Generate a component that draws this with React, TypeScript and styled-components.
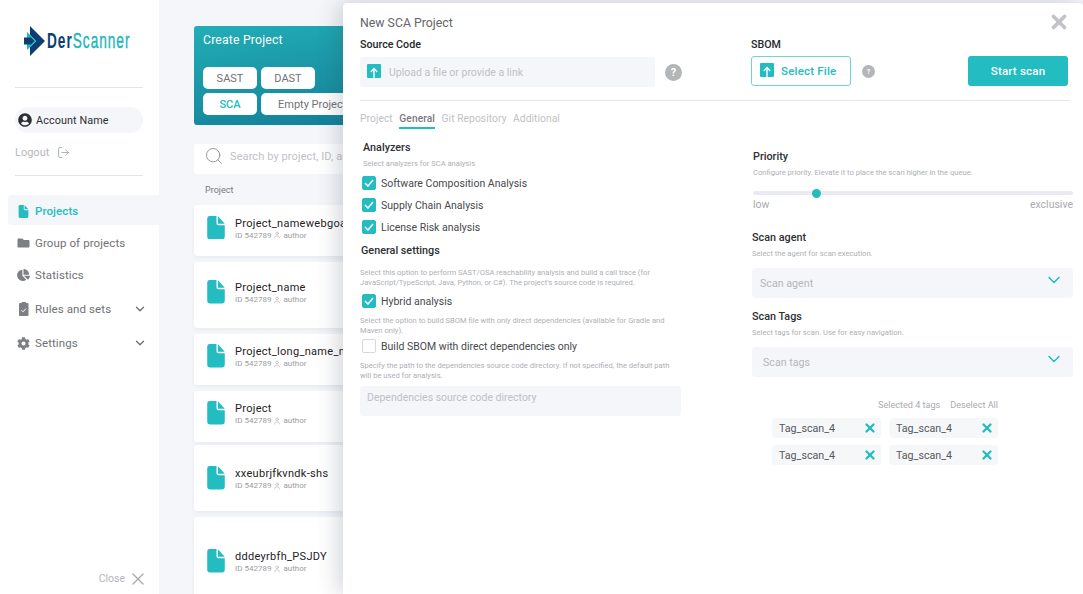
import styled, { createGlobalStyle } from 'styled-components';
import { ChevronDown, LogOut, Search, User, X } from 'lucide-react';
import { FaCog, FaFolder, FaUserCircle, FaChartPie } from 'react-icons/fa';

const TEAL = '#22bcc1';

const GlobalStyle = createGlobalStyle`
  * { box-sizing: border-box; }
  html, body { margin: 0; padding: 0; }
  body { font-family: Roboto, "Noto Sans", Arial, sans-serif; background: #fff; }
  #root { height: 594px; }
`;

const Page = styled.div`
  position: relative;
  display: flex;
  width: 1083px;
  height: 594px;
  overflow: hidden;
  background: #f4f6fa;
`;

const Sidebar = styled.aside`
  width: 159px;
  height: 594px;
  flex: none;
  background: #fff;
  display: flex;
  flex-direction: column;
  padding-top: 26px;
`;

const LogoRow = styled.div`
  display: flex;
  align-items: center;
  height: 30px;
  margin-left: 24px;
  gap: 1px;
  svg { flex: none; }
`;

const LogoText = styled.span`
  font-family: "Liberation Sans", sans-serif;
  font-size: 22px;
  font-weight: 700;
  letter-spacing: 1.6px;
  color: #0b3f73;
  display: inline-block;
  transform: scaleX(0.62);
  transform-origin: left center;
  white-space: nowrap;
  em { font-style: normal; color: #1fb5bc; font-weight: 400; -webkit-text-stroke: 0.4px #1fb5bc; }
`;

const SideDivider = styled.div<{ $top: number }>`
  width: 128px;
  height: 1px;
  margin: ${(p) => p.$top}px 0 0 15px;
  background: #e4e5e8;
`;

const AccountPill = styled.div`
  width: 128px;
  height: 26px;
  margin: 19px 0 0 15px;
  border-radius: 13px;
  background: #f4f6fa;
  display: flex;
  align-items: center;
  gap: 4px;
  padding-left: 3px;
  font-size: 10.8px;
  letter-spacing: 0.1px;
  color: #2d2f33;
`;

const Logout = styled.div`
  display: flex;
  align-items: center;
  gap: 8px;
  margin: 12px 0 0 15px;
  height: 14px;
  font-size: 11px;
  color: #b5b7bb;
`;

const NavList = styled.nav`
  display: flex;
  flex-direction: column;
  margin-top: 19px;
  padding-left: 8px;
`;

const NavItem = styled.div<{ $active?: boolean; $h: number }>`
  height: ${(p) => p.$h}px;
  display: flex;
  align-items: center;
  gap: 5px;
  padding: ${(p) => (p.$active ? 2 : 0)}px 13px 0 9px;
  border-radius: 4px 0 0 4px;
  font-size: 11.5px;
  letter-spacing: 0.1px;
  font-weight: ${(p) => (p.$active ? 500 : 400)};
  color: ${(p) => (p.$active ? TEAL : '#6f7175')};
  background: ${(p) => (p.$active ? '#f4f6fa' : 'transparent')};
  svg.lead { width: 13px; flex: none; }
  svg.chev { margin-left: auto; margin-right: -1px; }
`;

const CloseRow = styled.div`
  margin-top: auto;
  height: 25px;
  display: flex;
  align-items: flex-start;
  justify-content: flex-end;
  gap: 3px;
  padding-right: 11px;
  font-size: 10.5px;
  line-height: 20px;
  color: #b5b7bb;
`;

const Main = styled.main`
  flex: 1;
  min-width: 0;
  padding: 26px 0 0 35px;
  display: flex;
  flex-direction: column;
`;

const CreateCard = styled.section`
  width: 300px;
  height: 99px;
  flex: none;
  border-radius: 3px;
  padding: 6px 9px;
  background: linear-gradient(170deg, #22aeb6 0%, #0f7793 100%);
`;

const CreateTitle = styled.div`
  font-size: 12.2px;
  letter-spacing: 0.2px;
  color: #fff;
  height: 35px;
  padding-top: 1px;
`;

const TypeGrid = styled.div`
  display: grid;
  grid-template-columns: 54px 54px 120px;
  grid-auto-rows: 22px;
  gap: 4px;
`;

const TypeButton = styled.div<{ $active?: boolean; $wide?: boolean }>`
  ${(p) => (p.$wide ? 'grid-column: 2 / span 2; justify-content: flex-start; padding-left: 17px;' : 'justify-content: center;')}
  background: #fff;
  border-radius: 5px;
  display: flex;
  align-items: center;
  font-size: 11px;
  font-weight: ${(p) => (p.$active ? 500 : 400)};
  color: ${(p) => (p.$active ? TEAL : '#6f7175')};
  white-space: nowrap;
`;

const SearchBox = styled.div`
  width: 300px;
  height: 30px;
  flex: none;
  margin-top: 19px;
  background: #fff;
  border-radius: 3px;
  display: flex;
  align-items: center;
  gap: 6px;
  padding: 0 0 6px 10px;
  font-size: 11px;
  letter-spacing: 0.1px;
  color: #c0c2c6;
  white-space: nowrap;
  overflow: hidden;
`;

const ListLabel = styled.div`
  height: 31px;
  flex: none;
  padding: 11px 0 0 11px;
  font-size: 9px;
  color: #77797d;
`;

const Rows = styled.div`
  display: flex;
  flex-direction: column;
  gap: 6px;
`;

const Row = styled.div<{ $h: number; $nudge: number; $lift: number }>`
  width: 300px;
  height: ${(p) => p.$h}px;
  flex: none;
  margin-top: ${(p) => p.$nudge}px;
  padding: 0 0 ${(p) => p.$lift}px 13px;
  background: #fff;
  border-radius: 3px;
  box-shadow: 0 2px 4px rgba(40, 50, 90, 0.06);
  display: flex;
  align-items: center;
  gap: 10px;
`;

const RowText = styled.div`
  display: flex;
  flex-direction: column;
  padding-top: 2px;
  white-space: nowrap;
`;

const RowName = styled.div`
  font-size: 11px;
  letter-spacing: 0.3px;
  line-height: 13px;
  color: #1f2125;
`;

const RowMeta = styled.div`
  display: flex;
  align-items: center;
  gap: 2px;
  font-size: 8px;
  line-height: 11px;
  color: #9a9ca0;
`;

const Drawer = styled.section`
  position: absolute;
  top: 3px;
  left: 343px;
  width: 740px;
  height: 591px;
  background: #fff;
  border-radius: 4px 4px 0 0;
  box-shadow: -4px 0 22px rgba(60, 65, 85, 0.24);
  padding: 12px 15px 0 17px;
`;

const DrawerHead = styled.div`
  display: flex;
  justify-content: space-between;
  align-items: flex-start;
  height: 34px;
  svg { margin: -4px -2px 0 0; }
`;

const DrawerTitle = styled.h2`
  margin: 0;
  font-size: 12.3px;
  line-height: 16px;
  font-weight: 400;
  color: #63656a;
`;

const UploadRow = styled.div`
  display: flex;
  align-items: flex-start;
  margin: -11px -2px 0 0;
  height: 63px;
  border-bottom: 1px solid #e4e5e8;
`;

const SourceCol = styled.div`
  width: 295px;
`;

const FieldLabel = styled.div`
  font-size: 10.7px;
  font-weight: 500;
  line-height: 13px;
  color: #26282c;
`;

const UploadField = styled.div`
  height: 30px;
  margin-top: 6px;
  background: #f4f6fa;
  border-radius: 3px;
  display: flex;
  align-items: center;
  gap: 8px;
  padding-left: 7px;
  font-size: 10.5px;
  color: #bfc1c5;
`;

const HelpDot = styled.span<{ $size: number; $left: number; $top: number }>`
  width: ${(p) => p.$size}px;
  height: ${(p) => p.$size}px;
  flex: none;
  margin: ${(p) => p.$top}px 0 0 ${(p) => p.$left}px;
  border-radius: 50%;
  background: #b4b5b7;
  color: #fff;
  font-size: ${(p) => p.$size - 6}px;
  font-weight: 700;
  display: flex;
  align-items: center;
  justify-content: center;
`;

const SbomCol = styled.div`
  width: 100px;
  margin-left: 69px;
`;

const SelectFile = styled.div`
  width: 100px;
  height: 30px;
  margin-top: 5px;
  border: 1px solid #6fd5d8;
  border-radius: 3px;
  display: flex;
  align-items: center;
  gap: 7px;
  padding-left: 8px;
  font-size: 11.5px;
  font-weight: 500;
  letter-spacing: 0.2px;
  color: ${TEAL};
`;

const StartScan = styled.div`
  width: 100px;
  height: 30px;
  margin: 18px 0 0 93px;
  border-radius: 3px;
  background: ${TEAL};
  color: #fff;
  font-size: 11.5px;
  font-weight: 500;
  letter-spacing: 0.2px;
  display: flex;
  align-items: center;
  justify-content: center;
`;

const Tabs = styled.div`
  display: flex;
  gap: 6.5px;
  height: 29px;
  margin-top: 11px;
`;

const Tab = styled.div<{ $active?: boolean }>`
  height: 17px;
  font-size: 10.2px;
  line-height: 14px;
  letter-spacing: 0.1px;
  font-weight: ${(p) => (p.$active ? 500 : 400)};
  color: ${(p) => (p.$active ? '#77797d' : '#bfc1c5')};
  border-bottom: 2px solid ${(p) => (p.$active ? TEAL : 'transparent')};
`;

const Columns = styled.div`
  display: grid;
  grid-template-columns: 321px 321px;
  column-gap: 71px;
`;

const Column = styled.div`
  display: flex;
  flex-direction: column;
`;

const SectionTitle = styled.div<{ $left?: number; $top?: number }>`
  font-size: 10.8px;
  line-height: 14px;
  font-weight: 500;
  color: #2d2f33;
  margin: ${(p) => p.$top ?? 0}px 0 0 ${(p) => p.$left ?? 0}px;
`;

const Hint = styled.div<{ $left?: number; $top?: number }>`
  font-size: 7.6px;
  line-height: 10px;
  white-space: nowrap;
  color: #aeb0b4;
  margin: ${(p) => p.$top ?? 0}px 0 0 ${(p) => p.$left ?? 0}px;
`;

const CheckRow = styled.label<{ $top: number }>`
  display: flex;
  align-items: center;
  gap: 5px;
  height: 14px;
  margin: ${(p) => p.$top}px 0 0 2px;
  font-size: 10.5px;
  color: #47494d;
`;

const CheckBox = styled.span<{ $on?: boolean }>`
  width: 14px;
  height: 14px;
  flex: none;
  border-radius: 2px;
  background: ${(p) => (p.$on ? TEAL : '#fff')};
  border: 1px solid ${(p) => (p.$on ? TEAL : '#d6d7da')};
  display: flex;
  align-items: center;
  justify-content: center;
`;

const DepsField = styled.div`
  height: 30px;
  margin-top: 5px;
  background: #f4f6fa;
  border-radius: 3px;
  padding: 5px 7px;
  font-size: 10.5px;
  line-height: 13px;
  color: #bfc1c5;
`;

const SliderTrack = styled.div`
  position: relative;
  height: 4px;
  margin: 13px 0 0 1px;
  border-radius: 2px;
  background: #e9ebf0;
`;

const SliderThumb = styled.span`
  position: absolute;
  left: 59px;
  top: -2.5px;
  width: 9px;
  height: 9px;
  border-radius: 50%;
  background: ${TEAL};
`;

const SliderLabels = styled.div`
  display: flex;
  justify-content: space-between;
  margin: 3px 0 0 1px;
  font-size: 10.5px;
  line-height: 13px;
  color: #a9abaf;
`;

const SelectBox = styled.div<{ $left: number }>`
  height: 30px;
  margin-top: 9px;
  background: #f4f6fa;
  border-radius: 4px;
  display: flex;
  align-items: center;
  justify-content: space-between;
  padding: 0 9px 0 ${(p) => p.$left}px;
  font-size: 10.7px;
  color: #b5b7bb;
  svg { margin-top: -7px; }
`;

const TagsHead = styled.div`
  display: flex;
  justify-content: flex-end;
  gap: 10px;
  margin: 22px 75px 0 0;
  font-size: 9.1px;
  line-height: 12px;
  color: #a9abaf;
`;

const TagGrid = styled.div`
  display: grid;
  grid-template-columns: 109px 109px;
  grid-auto-rows: 20px;
  gap: 7px 8px;
  margin: 7px 0 0 20px;
`;

const Tag = styled.div`
  background: #f6f7f9;
  border-radius: 3px;
  display: flex;
  align-items: center;
  justify-content: space-between;
  padding: 0 4px 0 7px;
  font-size: 10.7px;
  color: #55575b;
`;

const DocIcon = ({ size = 18, color = TEAL }: { size?: number; color?: string }) => (
  <svg className="lead" width={size} height={size * 1.3} viewBox="0 0 18 24" fill="none">
    <path d="M2.5 0H9.5V7.5a2 2 0 0 0 2 2H18V21a3 3 0 0 1-3 3H3a3 3 0 0 1-3-3V2.5A2.5 2.5 0 0 1 2.5 0Z" fill={color} />
    <path d="M11 0.3L18 8H11Z" fill={color} />
  </svg>
);

const RulesIcon = () => (
  <svg className="lead" width="13" height="14" viewBox="0 0 13 14" fill="none">
    <path d="M3 1h7.5a1 1 0 0 1 1 1v11a1 1 0 0 1-1 1H3a1 1 0 0 1-1-1V2a1 1 0 0 1 1-1Z" fill="#7d7f83" />
    <rect x="4.5" y="0" width="4.5" height="2.4" rx="0.8" fill="#7d7f83" />
    <path d="M4.4 8.2l1.6 1.6 3-3.2" stroke="#fff" strokeWidth="1" fill="none" />
  </svg>
);

const UploadIcon = () => (
  <svg width="14" height="16" viewBox="0 0 14 16" fill="none">
    <rect width="14" height="14" rx="1" fill={TEAL} />
    <path d="M7 16V5M3.8 8L7 4.6 10.2 8" stroke="#fff" strokeWidth="1.4" fill="none" />
  </svg>
);

const Tick = () => (
  <svg width="10" height="8" viewBox="0 0 10 8" fill="none">
    <path d="M1 4l3 3 5-6" stroke="#fff" strokeWidth="1.5" fill="none" />
  </svg>
);

const LogoMark = () => (
  <svg width="22" height="30" viewBox="0 0 22 30" fill="none">
    <path d="M6 0L21 15 6 30V21L12 15 6 9Z" fill="#0b3f73" />
    <path d="M3 6L12 15 3 24Z" fill="#1fb5bc" />
    <path d="M0 11.5H7L10.5 15 7 18.5H0Z" fill="#0b3f73" />
  </svg>
);

const rows = [
  { name: 'Project_namewebgoat', h: 51, nudge: 0, lift: 6 },
  { name: 'Project_name', h: 66, nudge: 0, lift: 6 },
  { name: 'Project_long_name_name', h: 51, nudge: 0, lift: 7 },
  { name: 'Project', h: 51, nudge: 0, lift: 7 },
  { name: 'xxeubrjfkvndk-shs', h: 66, nudge: -3, lift: 0 },
  { name: 'dddeyrbfh_PSJDY', h: 88, nudge: 0, lift: 0 },
];

const App = () => (
  <Page>
    <GlobalStyle />
    <Sidebar>
      <LogoRow>
        <LogoMark />
        <LogoText>
          Der<em>Scanner</em>
        </LogoText>
      </LogoRow>
      <SideDivider $top={31} />
      <AccountPill>
        <FaUserCircle size={14} color="#2d2f33" />
        Account Name
      </AccountPill>
      <Logout>
        Logout
        <LogOut size={13} strokeWidth={1.3} color="#8f9195" />
      </Logout>
      <SideDivider $top={16} />
      <NavList>
        <NavItem $active $h={30}>
          <DocIcon size={10} />
          Projects
        </NavItem>
        <NavItem $h={36}>
          <FaFolder className="lead" size={12} color="#7d7f83" />
          Group of projects
        </NavItem>
        <NavItem $h={28}>
          <FaChartPie className="lead" size={12} color="#7d7f83" />
          Statistics
        </NavItem>
        <NavItem $h={40}>
          <RulesIcon />
          Rules and sets
          <ChevronDown className="chev" size={14} strokeWidth={2.4} />
        </NavItem>
        <NavItem $h={28}>
          <FaCog className="lead" size={13} color="#7d7f83" />
          Settings
          <ChevronDown className="chev" size={14} strokeWidth={2.4} />
        </NavItem>
      </NavList>
      <CloseRow>
        Close
        <X size={20} strokeWidth={1.5} color="#a5a7ab" />
      </CloseRow>
    </Sidebar>
    <Main>
      <CreateCard>
        <CreateTitle>Create Project</CreateTitle>
        <TypeGrid>
          <TypeButton>SAST</TypeButton>
          <TypeButton>DAST</TypeButton>
          <span />
          <TypeButton $active>SCA</TypeButton>
          <TypeButton $wide>Empty Project</TypeButton>
        </TypeGrid>
      </CreateCard>
      <SearchBox>
        <Search size={20} strokeWidth={1.1} color="#8f9195" />
        Search by project, ID, author
      </SearchBox>
      <ListLabel>Project</ListLabel>
      <Rows>
        {rows.map((r) => (
          <Row key={r.name} $h={r.h} $nudge={r.nudge} $lift={r.lift}>
            <DocIcon />
            <RowText>
              <RowName>{r.name}</RowName>
              <RowMeta>
                ID 542789 <User size={8} strokeWidth={1.4} /> author
              </RowMeta>
            </RowText>
          </Row>
        ))}
      </Rows>
    </Main>
    <Drawer>
      <DrawerHead>
        <DrawerTitle>New SCA Project</DrawerTitle>
        <X size={22} strokeWidth={4} color="#c2c3c6" />
      </DrawerHead>
      <UploadRow>
        <SourceCol>
          <FieldLabel>Source Code</FieldLabel>
          <UploadField>
            <UploadIcon />
            Upload a file or provide a link
          </UploadField>
        </SourceCol>
        <HelpDot $size={17} $left={10} $top={26}>?</HelpDot>
        <SbomCol>
          <FieldLabel>SBOM</FieldLabel>
          <SelectFile>
            <UploadIcon />
            Select File
          </SelectFile>
        </SbomCol>
        <HelpDot $size={13} $left={11} $top={27}>?</HelpDot>
        <StartScan>Start scan</StartScan>
      </UploadRow>
      <Tabs>
        <Tab>Project</Tab>
        <Tab $active>General</Tab>
        <Tab>Git Repository</Tab>
        <Tab>Additional</Tab>
      </Tabs>
      <Columns>
        <Column>
          <SectionTitle $left={3}>Analyzers</SectionTitle>
          <Hint $left={3} $top={4}>Select analyzers for SCA analysis</Hint>
          <CheckRow $top={7}><CheckBox $on><Tick /></CheckBox>Software Composition Analysis</CheckRow>
          <CheckRow $top={8}><CheckBox $on><Tick /></CheckBox>Supply Chain Analysis</CheckRow>
          <CheckRow $top={8}><CheckBox $on><Tick /></CheckBox>License Risk analysis</CheckRow>
          <SectionTitle $left={1} $top={10}>General settings</SectionTitle>
          <Hint $top={10}>
            Select this option to perform SAST/OSA reachability analysis and build a call trace (for
            <br />
            JavaScript/TypeScript, Java, Python, or C#). The project's source code is required.
          </Hint>
          <CheckRow $top={6}><CheckBox $on><Tick /></CheckBox>Hybrid analysis</CheckRow>
          <Hint $top={8}>
            Select the option to build SBOM file with only direct dependencies (available for Gradle and
            <br />
            Maven only).
          </Hint>
          <CheckRow $top={3}><CheckBox />Build SBOM with direct dependencies only</CheckRow>
          <Hint $top={8}>
            Specify the path to the dependencies source code directory. If not specified, the default path
            <br />
            will be used for analysis.
          </Hint>
          <DepsField>Dependencies source code directory</DepsField>
        </Column>
        <Column>
          <SectionTitle $left={1} $top={9}>Priority</SectionTitle>
          <Hint $left={1} $top={4}>Configure priority. Elevate it to place the scan higher in the queue.</Hint>
          <SliderTrack><SliderThumb /></SliderTrack>
          <SliderLabels><span>low</span><span>exclusive</span></SliderLabels>
          <SectionTitle $top={20}>Scan agent</SectionTitle>
          <Hint $top={4}>Select the agent for scan execution.</Hint>
          <SelectBox $left={8}>
            Scan agent
            <ChevronDown size={20} strokeWidth={1.8} color={TEAL} />
          </SelectBox>
          <SectionTitle $top={12}>Scan Tags</SectionTitle>
          <Hint $top={4}>Select tags for scan. Use for easy navigation.</Hint>
          <SelectBox $left={11}>
            Scan tags
            <ChevronDown size={20} strokeWidth={1.8} color={TEAL} />
          </SelectBox>
          <TagsHead>
            <span>Selected 4 tags</span>
            <span>Deselect All</span>
          </TagsHead>
          <TagGrid>
            {[1, 2, 3, 4].map((n) => (
              <Tag key={n}>
                Tag_scan_4
                <X size={14} strokeWidth={4} color={TEAL} />
              </Tag>
            ))}
          </TagGrid>
        </Column>
      </Columns>
    </Drawer>
  </Page>
);

export default App;
